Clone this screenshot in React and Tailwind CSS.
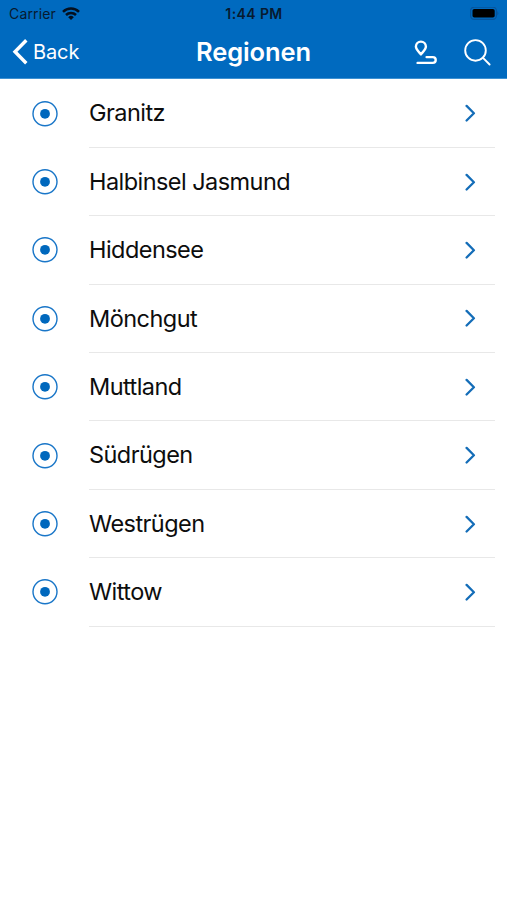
const regions = [
  'Granitz',
  'Halbinsel Jasmund',
  'Hiddensee',
  'Mönchgut',
  'Muttland',
  'Südrügen',
  'Westrügen',
  'Wittow',
];

function StatusBar() {
  return (
    <div className="grid h-[27px] grid-cols-3 items-center pl-[9px] pr-[8px] text-[#071a30]">
      <div className="flex items-center gap-[6px]">
        <span className="pt-px text-[14px] leading-none tracking-[0.15px]">Carrier</span>
        <svg width="18" height="14" viewBox="0 0 18 14" fill="none" stroke="#04101f" strokeWidth="2.5">
          <path d="M1 4.8A11.4 11.4 0 0 1 17 4.8" />
          <path d="M4 8A7.1 7.1 0 0 1 14 8" />
          <path d="M6.2 10.2a4 4 0 0 1 5.6 0L9 13z" fill="#04101f" stroke="none" />
        </svg>
      </div>
      <span className="pt-px text-center text-[14px] font-semibold leading-none tracking-[0.4px]">1:44 PM</span>
      <svg className="justify-self-end" width="29" height="14" viewBox="0 0 29 14">
        <rect x="0.6" y="0.1" width="25.8" height="12.3" rx="3.6" fill="none" stroke="#07549b" strokeWidth="1.2" />
        <rect x="2.5" y="2" width="22.2" height="8.6" rx="1.8" fill="#000000" />
        <path d="M27.4 4q1.8 2.2 0 4.5z" fill="#07549b" />
      </svg>
    </div>
  );
}

function NavBar() {
  return (
    <div className="grid h-[50px] grid-cols-[1fr_auto_1fr] items-center pl-[12px] pr-[15px] text-white">
      <button className="flex items-center gap-[5px]">
        <svg width="16" height="28" viewBox="0 0 16 28" fill="none" stroke="currentColor" strokeWidth="3.4">
          <path d="M14.3 2.2 3 13.7l11.3 11.5" />
        </svg>
        <span className="text-[20px] leading-none tracking-[-0.1px]">Back</span>
      </button>
      <h1 className="pl-[3px] text-[25.5px] font-semibold leading-none tracking-[-0.1px]">Regionen</h1>
      <div className="flex items-center justify-end gap-[26px]">
        <svg width="24" height="26" viewBox="0 0 24 26" fill="none" stroke="currentColor" strokeWidth="2.4" strokeLinecap="round" strokeLinejoin="round">
          <path d="M6.9 15.4C4.4 12.5 1.9 10.3 1.9 7.6a5 5 0 0 1 10 0c0 2.7-2.5 4.9-5 7.8z" />
          <path d="M12.6 18.1h6.2a2.9 2.9 0 0 1 0 5.8H3.6" />
        </svg>
        <svg width="28" height="28" viewBox="0 0 28 28" fill="none" stroke="currentColor" strokeWidth="1.9" strokeLinecap="round">
          <circle cx="11.5" cy="12.4" r="10.3" />
          <path d="m18.8 19.7 6.8 6.8" />
        </svg>
      </div>
    </div>
  );
}

function RegionRow({ name }) {
  return (
    <li className="flex h-[68.4px] items-stretch pl-[32px] pr-[12.5px]">
      <div className="flex w-[57px] items-center">
        <svg width="26" height="26" viewBox="0 0 26 26">
          <circle cx="13" cy="12.8" r="12" fill="none" stroke="#1976c8" strokeWidth="1.4" />
          <circle cx="13" cy="12.8" r="4.9" fill="#0068bd" />
        </svg>
      </div>
      <div className="flex flex-1 items-center justify-between border-b-[1.4px] border-[#e8e8e8] pr-[18px]">
        <span className="text-[23.5px] leading-none tracking-[-0.55px] text-[#0d0d0d]">{name}</span>
        <svg width="12" height="18" viewBox="0 0 12 18" fill="none" stroke="#146db8" strokeWidth="2.3" strokeLinecap="round" strokeLinejoin="round">
          <path d="m1.6 1.9 7.3 7.3-7.3 7.3" />
        </svg>
      </div>
    </li>
  );
}

export default function App() {
  return (
    <main className="h-[900px] w-[507px] overflow-hidden bg-white font-['Inter','Liberation_Sans',sans-serif]">
      <header className="h-[79px] border-b border-[#3d91d3] bg-[#006abf]">
        <StatusBar />
        <NavBar />
      </header>
      <ul className="pt-[0.5px]">
        {regions.map((name) => (
          <RegionRow key={name} name={name} />
        ))}
      </ul>
    </main>
  );
}
